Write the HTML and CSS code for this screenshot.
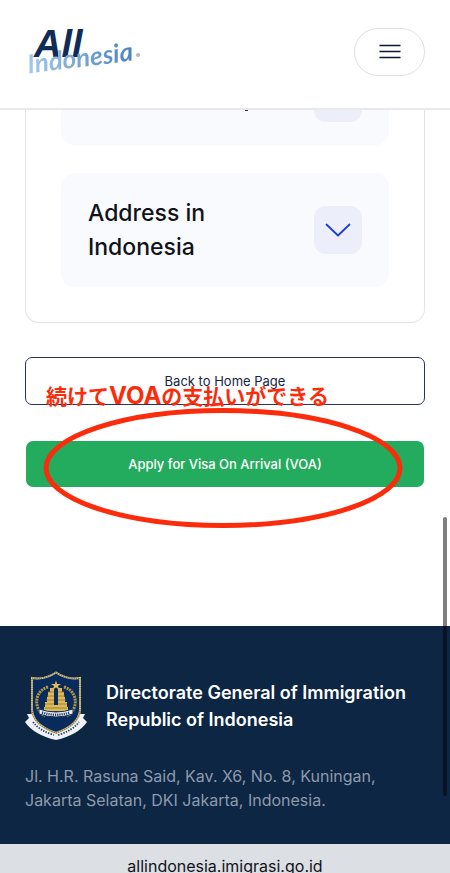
FILE: index.html
```html
<!DOCTYPE html>
<html lang="en">
<head>
<meta charset="utf-8">
<meta name="viewport" content="width=device-width, initial-scale=1">
<title>All Indonesia</title>
<link rel="stylesheet" href="styles.css">
</head>
<body>
<header class="site-header">
  <a class="brand" href="#">
    <span class="brand-all">All</span>
    <span class="brand-country">Indonesia</span>
    <span class="brand-dot"></span>
  </a>
  <button class="menu-button" type="button" aria-label="Menu">
    <svg width="22" height="16" viewBox="0 0 22 16" fill="none" stroke="#0c1737" stroke-width="1.6"><path d="M0.5 1.500H21.5M0.5 7.500H21.5M0.5 13.500H21.5"/></svg>
  </button>
</header>
<main class="content">
  <section class="panel">
    <div class="row row-cut"><span class="row-mark"></span><span class="chevron chevron-cut"></span></div>
    <div class="row">
      <h2 class="row-title" id="address-title">Address in Indonesia</h2>
      <button class="chevron" type="button" aria-labelledby="address-title">
        <svg width="26" height="14" viewBox="0 0 26 14" fill="none" stroke="#1d3fd0" stroke-width="1.8" stroke-linecap="round" stroke-linejoin="round"><path d="M1.5 1.5L13 12.5L24.5 1.5"/></svg>
      </button>
    </div>
  </section>
  <section class="actions">
    <button class="button button-outline" type="button">Back to Home Page</button>
    <button class="button button-primary" type="button">Apply for Visa On Arrival (VOA)</button>
    <p class="note" lang="ja">続けて<span class="note-latin">VOA</span>の支払いができる</p>
    <svg class="ring" viewBox="0 0 360 122" fill="none" stroke="#fa2c0b" stroke-width="5" aria-hidden="true"><ellipse cx="180" cy="61" rx="177" ry="57.5"/></svg>
  </section>
</main>
<footer class="site-footer">
  <div class="agency">
    <svg class="crest" viewBox="0 0 62 70" aria-hidden="true">
      <path d="M2 43H9Q16 56 31 60Q46 56 53 43H60L58 47L62 51Q53 64 31 69Q9 64 0 51L4 47Z" fill="#eef1f5"/>
      <path d="M7 7Q20 9 31 1.500Q42 9 55 7V39Q54 54 31 62Q8 54 7 39Z" fill="#082b5e" stroke="#d8c896" stroke-width="2"/>
      <path d="M7 7Q20 9 31 1.500Q42 9 55 7V39Q54 54 31 62Q8 54 7 39Z" fill="none" stroke="#8a7440" stroke-width="1.400" stroke-dasharray="1.200 1"/>
      <path d="M23 16C9 20 8 38 20 45M39 16C53 20 54 38 42 45" fill="none" stroke="#b89640" stroke-width="3" stroke-dasharray="2 .8"/>
      <path d="M31 9.500L32.200 12.900H36L33 15.100L34.200 18.500L31 16.500L27.800 18.500L29 15.100L26 12.900H29.800Z" fill="#e3b957"/>
      <path d="M25 17H29V34H33V17H37V21H39V26H40V31H42V36H43V40H19V36H20V31H22V26H23V21H25Z" fill="#e0b956"/>
      <path d="M23 21H29M22 25H29M21 29H29M20 33H29M20 37H42M33 21H39M33 25H40M33 29H41M33 33H42" stroke="#8d7438" stroke-width=".8"/>
      <path d="M14 38Q31 44 48 38V43Q31 49 14 43Z" fill="#e5e9ef" stroke="#15305a"/>
      <path d="M17 41.500Q31 46 45 41.500" fill="none" stroke="#263f66" stroke-width="2.400" stroke-dasharray="1.200 1"/>
      <path d="M8 51Q15 60 29 64M33 64Q47 60 54 51" fill="none" stroke="#304468" stroke-width="1.800" stroke-dasharray="1.400 1.300"/>
    </svg>
    <h2 class="agency-name">Directorate General of Immigration<br>Republic of Indonesia</h2>
  </div>
  <address class="address">Jl. H.R. Rasuna Said, Kav. X6, No. 8, Kuningan,<br>Jakarta Selatan, DKI Jakarta, Indonesia.</address>
</footer>
<div class="url-bar">allindonesia.imigrasi.go.id</div>
<div class="scroll-thumb"></div>
</body>
</html>
```
FILE: styles.css
```css
* { box-sizing: border-box; }

body {
  position: relative;
  display: flex;
  flex-direction: column;
  height: 100vh;
  margin: 0;
  overflow: hidden;
  background: #fff;
  color: #111318;
  font-family: Inter, "Noto Sans CJK JP", sans-serif;
}

h2, p { margin: 0; }
button { font-family: inherit; padding: 0; cursor: pointer; }

.site-header {
  display: flex;
  flex: none;
  align-items: center;
  justify-content: space-between;
  padding: 28px 25px 32px;
  border-bottom: 2px solid #e8e9ed;
}

.brand {
  position: relative;
  width: 116px;
  height: 48px;
  text-decoration: none;
}

.brand-all {
  position: absolute;
  top: -3px;
  left: 9px;
  color: #102b57;
  font: italic 700 38px/38px "Liberation Sans", sans-serif;
}

.brand-country {
  position: absolute;
  top: 13px;
  left: 2px;
  background: linear-gradient(90deg, #a3c9ec, #4b84bd);
  background-clip: text;
  color: transparent;
  font: italic 700 26px/32px Lato, sans-serif;
  transform: rotate(-7deg);
}

.brand-dot {
  position: absolute;
  top: 25px;
  right: 1px;
  width: 4px;
  height: 4px;
  border-radius: 50%;
  background: #b4b9bd;
}

.menu-button {
  display: grid;
  place-items: center;
  width: 71px;
  height: 48px;
  border: 1px solid #dfe1e8;
  border-radius: 24px;
  background: #fff;
}

.content { flex: 1; padding: 0 25px; }

.panel {
  display: grid;
  gap: 28px;
  padding: 0 35px 35px;
  border: 1px solid #e2e3e6;
  border-top: 0;
  border-radius: 0 0 14px 14px;
}

.row {
  display: flex;
  align-items: center;
  justify-content: space-between;
  padding: 23px 27px;
  border-radius: 14px;
  background: #f8fafd;
}

.row-cut {
  align-items: flex-start;
  height: 35px;
  padding-top: 0;
  border-radius: 0 0 14px 14px;
}

.row-mark {
  width: 3px;
  height: 1px;
  margin-left: 157px;
  background: #333;
}

.row-title {
  max-width: 160px;
  font-size: 23px;
  font-weight: 500;
  line-height: 34px;
}

.chevron {
  display: grid;
  place-items: center;
  width: 48px;
  height: 48px;
  border: 0;
  border-radius: 12px;
  background: #eceef9;
}

.chevron-cut { height: 12px; border-radius: 0 0 12px 12px; }

.actions {
  position: relative;
  display: grid;
  gap: 36px;
  margin-top: 34px;
}

.button {
  height: 48px;
  border-radius: 7px;
  font-size: 13px;
}

.button-outline {
  border: 1px solid #27345b;
  background: #fff;
  color: #17233f;
}

.button-primary {
  height: 46px;
  margin: 0 1px;
  border: 0;
  background: #23ac5d;
  color: #fff;
  font-weight: 500;
}

.note {
  position: absolute;
  top: 23px;
  left: 21px;
  color: #fa2c0b;
  font: 700 21px/30px "Noto Sans CJK JP", sans-serif;
  white-space: nowrap;
}

.note-latin { font: 700 24px/24px Inter, sans-serif; }

.ring {
  position: absolute;
  top: 50px;
  left: 18px;
  width: 90%;
  pointer-events: none;
}

.site-footer {
  flex: none;
  padding: 45px 25px 32px;
  background: #0c2643;
  color: #fff;
}

.agency { display: flex; align-items: center; gap: 19px; }
.crest { flex: none; width: 62px; height: 70px; }

.agency-name {
  font-size: 18px;
  font-weight: 600;
  line-height: 27px;
  white-space: nowrap;
}

.address {
  margin-top: 23px;
  color: #8e9aac;
  font-size: 16px;
  font-style: normal;
  line-height: 24px;
}

.url-bar {
  flex: none;
  height: 29px;
  padding-top: 10px;
  overflow: hidden;
  background: #dcdfe4;
  font-size: 16px;
  line-height: 24px;
  text-align: center;
}

.scroll-thumb {
  position: absolute;
  right: 3px;
  bottom: 77px;
  width: 4px;
  height: 279px;
  border-radius: 2px;
  background: rgba(0, 0, 0, .5);
}
```
